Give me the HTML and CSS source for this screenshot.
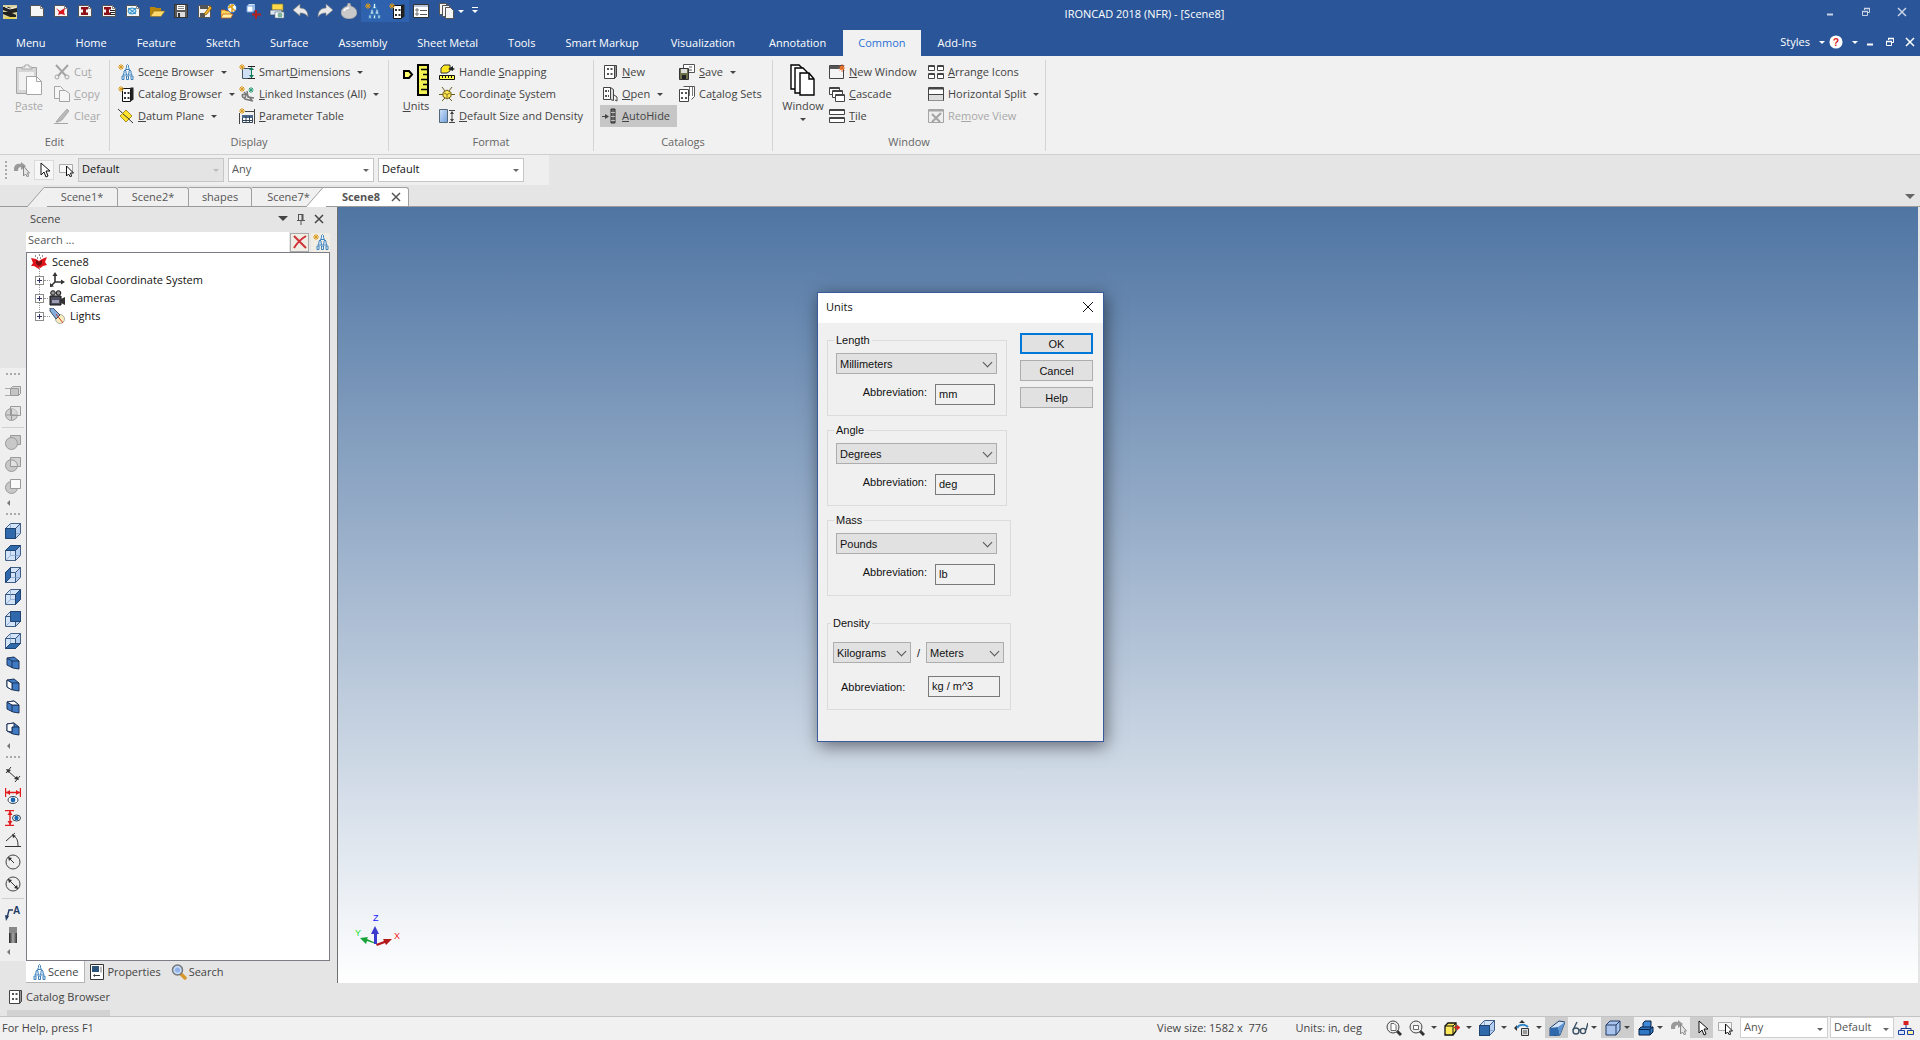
FILE: index.html
```html
<!DOCTYPE html>
<html lang="en">
  <head>
    <meta charset="UTF-8" />
    <meta name="viewport" content="width=device-width, initial-scale=1.0" />
    <title>IRONCAD 2018 (NFR) - [Scene8]</title>
    <link rel="stylesheet" href="styles.css">
  </head>
  <body>
    <!-- icon sprite -->
    <svg class="sprite" aria-hidden="true">
      <defs>
        <linearGradient id="g-blue" x1="0" y1="0" x2="1" y2="1">
          <stop offset="0" stop-color="#cfe2fa" /><stop offset="1" stop-color="#6f9fdc" />
        </linearGradient>
        <linearGradient id="g-metal" x1="0" y1="0" x2="1" y2="0">
          <stop offset="0" stop-color="#222" /><stop offset=".5" stop-color="#aaa" /><stop offset="1" stop-color="#333" />
        </linearGradient>
      </defs>
      <symbol id="i-app" viewBox="0 0 16 16">
        <path d="M1 1h14v14H1z" fill="#d9d09a" /><path d="M1 3h6l3 2 5-1v4l-5 1 4 2v2H8L1 10V8l5 0-5-2z" fill="#222" /><path d="M3 3l5 2 6-2" stroke="#eee" fill="none" /><path d="M3 13h10v2H3z" fill="#e8d34c" />
      </symbol>
      <symbol id="i-page" viewBox="0 0 16 16">
        <path d="M1.500 2.500h10l3 3v8h-13z" fill="#f6f6f6" stroke="#555" /><path d="M11.500 2.500v3h3" fill="none" stroke="#888" />
      </symbol>
      <symbol id="i-page-red" viewBox="0 0 16 16">
        <use href="#i-page" /><path d="M3 5l4 3 5-3-1 4 1 3-4-1-3 1 1-3z" fill="#d8181c" />
      </symbol>
      <symbol id="i-page-beam" viewBox="0 0 16 16">
        <use href="#i-page" /><path d="M4 4h7v2.500H9v3h2V12H4V9.500h2v-3H4z" fill="#8f1118" />
      </symbol>
      <symbol id="i-page-beam2" viewBox="0 0 16 16">
        <use href="#i-page" /><path d="M3 4h7v2.500H8v3h2V12H3V9.500h2v-3H3z" fill="#8f1118" /><path d="M9 7.500h5M9 9.500h5M9 11.500h5" stroke="#222" />
      </symbol>
      <symbol id="i-page-blue" viewBox="0 0 16 16">
        <use href="#i-page" /><ellipse cx="7" cy="8" rx="4" ry="3" fill="#bfe2f5" stroke="#2b8cc9" /><path d="M3 5l8 6M4 11l7-6" stroke="#2b8cc9" />
      </symbol>
      <symbol id="i-folder" viewBox="0 0 16 16">
        <path d="M1 4h5l1 1h5v3H5l-3 5H1z" fill="#b8860b" /><path d="M5 8h11l-4 5.500H1.500z" fill="#ffd96b" stroke="#8a6a14" stroke-width=".6" />
      </symbol>
      <symbol id="i-save" viewBox="0 0 16 16">
        <path d="M1.500 1.500h13v13h-13z" fill="#5a5a5a" stroke="#333" /><path d="M4 2h8v5H4z" fill="#fff" /><path d="M4 9h8v5H4z" fill="#ddd" /><path d="M5 10h2v4H5z" fill="#333" /><path d="M5 3.500h6M5 5.500h6" stroke="#888" />
      </symbol>
      <symbol id="i-save-as" viewBox="0 0 16 16">
        <path d="M1.500 2.500h12v12h-12z" fill="#f1f1f1" stroke="#555" /><path d="M3 3h8v3H3zM3 10h5v4H3z" fill="#555" /><path d="M7 11l6-8 2 2-6 7z" fill="#f0b429" stroke="#7a4b00" stroke-width=".7" />
      </symbol>
      <symbol id="i-open-lib" viewBox="0 0 16 16">
        <path d="M0 7h4l1 1h5v6H0z" fill="#ffd75e" stroke="#c55a11" stroke-width=".8" /><circle cx="11" cy="5" r="4.500" fill="#fff" stroke="#2f6fc4" /><path d="M8 2l6 6M11 1v8M7 5l6-3" stroke="#e0a11b" stroke-width="1.500" /><path d="M2 11h10l-2 4H0z" fill="#fff0a8" stroke="#c55a11" stroke-width=".8" />
      </symbol>
      <symbol id="i-cube-plus" viewBox="0 0 16 16">
        <path d="M2 3l2-2h6l-2 2z" fill="#cfe2fa" /><path d="M2 3h6v6H2z" fill="#fff" stroke="#6f9fdc" /><path d="M8 3l2-2v6L8 9z" fill="#9bbbe6" /><path d="M11 7v9M7 11.500h9" stroke="#b22020" stroke-width="2" />
      </symbol>
      <symbol id="i-print" viewBox="0 0 16 16">
        <path d="M3 1h11v7H3z" fill="#ffd84a" stroke="#7a7a33" stroke-width=".7" /><path d="M1 7h12v5H1z" fill="#d9e6f2" stroke="#345" stroke-width=".7" /><path d="M6 9h9v6H6z" fill="#fff" stroke="#678" stroke-width=".7" /><circle cx="11" cy="12" r="2.500" fill="#7fb3a0" />
      </symbol>
      <symbol id="i-undo" viewBox="0 0 16 16">
        <path d="M0 7l7-6v4c5 0 8 3 8 9-2-3-4-4-8-4v3z" fill="#e8e8e8" stroke="#777" stroke-width=".6" />
      </symbol>
      <symbol id="i-redo" viewBox="0 0 16 16">
        <path d="M16 7L9 1v4c-5 0-8 3-8 9 2-3 4-4 8-4v3z" fill="#e8e8e8" stroke="#777" stroke-width=".6" />
      </symbol>
      <symbol id="i-ball" viewBox="0 0 16 16">
        <path d="M7 0h2l1 3c3 1 6 3 6 7 0 3-4 6-8 6s-8-3-8-6c0-4 3-6 6-7z" fill="#c9c9c9" stroke="#8a8a8a" stroke-width=".6" /><path d="M3 8c1-3 4-3 5-3" stroke="#fff" fill="none" stroke-width="1.500" />
      </symbol>
      <symbol id="i-star" viewBox="0 0 16 16">
        <path d="M3 0v6M0 3h6M1 1l4 4M5 1L1 5" stroke="#d99a1c" stroke-width="1" />
      </symbol>
      <symbol id="i-tree" viewBox="0 0 16 16">
        <g fill="#e6f3fb" stroke="#3d80bb" stroke-width="1" stroke-linejoin="round"><path d="M9.500.5l1 1v2l1 2h-4l1-2v-2z" /><path d="M7 6l1 1v2l1 2H5l1-2V7zM12 6l1 1v2l1 2h-4l1-2V7z" /><path d="M4 12h2v3.500H4zM8.500 12h2v3.500h-2zM13 12h2v3.500h-2z" /></g>
      </symbol>
      <symbol id="i-tree-new" viewBox="0 0 16 16"><use href="#i-tree" /><use href="#i-star" /></symbol>
      <symbol id="i-catalog" viewBox="0 0 16 16">
        <path d="M2.500 1.500h10v13h-10z" fill="#fff" stroke="#444" /><path d="M12.500 1.500h2v11l-2 2z" fill="#999" stroke="#444" /><path d="M5 4h2v2H5zM8.500 4h2v2h-2zM5 9h2v2H5zM8.500 9h2v2h-2z" fill="#555" />
      </symbol>
      <symbol id="i-catalog-new" viewBox="0 0 16 16">
        <path d="M4.500 2.500h8v13h-8z" fill="#fff" stroke="#111" /><path d="M12.500 1.500h3v12l-3 2z" fill="#222" /><path d="M6 6h2v2H6zM9.500 6h2v2h-2zM6 11h2v2H6zM9.500 11h2v2h-2z" fill="#333" /><use href="#i-star" />
      </symbol>
      <symbol id="i-list" viewBox="0 0 16 16">
        <path d="M.5 1.500h15v13H.5z" fill="#fff" stroke="#333" /><path d="M1 2h14v2H1z" fill="#b9c4d8" /><path d="M3 6h2v2H3zM3 10h2v2H3z" fill="#fff" stroke="#555" stroke-width=".8" /><path d="M7 7.500h7M7 11.500h7" stroke="#555" />
      </symbol>
      <symbol id="i-pages" viewBox="0 0 16 16">
        <g fill="#f4f4f4" stroke="#555"><path d="M.5.5h7v11h-7z" /><path d="M3.500 2.500h7v11h-7z" /><path d="M6.500 4.500h5l3 3v8h-8z" /></g>
      </symbol>
      <symbol id="i-paste" viewBox="0 0 28 32">
        <path d="M1.500 3.500h20v26h-20z" fill="#d6d6d6" stroke="#a5a5a5" /><path d="M7 5V3h3V1h4v2h3v2z" fill="#f4f4f4" stroke="#a5a5a5" /><path d="M4 8h15v18H4z" fill="#f1f1f1" /><path d="M11.500 12.500h10l5 5v13h-15z" fill="#fff" stroke="#a5a5a5" /><path d="M21.500 12.500v5h5" fill="none" stroke="#a5a5a5" />
      </symbol>
      <symbol id="i-cut" viewBox="0 0 16 16">
        <path d="M2 1l10 11M14 1L4 12" stroke="#a5a5a5" stroke-width="2" /><circle cx="3" cy="13" r="2" fill="none" stroke="#a5a5a5" /><circle cx="13" cy="13" r="2" fill="none" stroke="#a5a5a5" />
      </symbol>
      <symbol id="i-copy" viewBox="0 0 16 16">
        <g fill="#f6f6f6" stroke="#a5a5a5"><path d="M.5.5h6l3 3v9h-9z" /><path d="M5.500 4.500h6l4 3v8h-10z" /></g>
      </symbol>
      <symbol id="i-clear" viewBox="0 0 16 16">
        <path d="M2 14l3-4L13 1l2 2-7 9-4 2z" fill="#b9b9b9" stroke="#9a9a9a" stroke-width=".7" /><path d="M0 15.500h14" stroke="#a5a5a5" />
      </symbol>
      <symbol id="i-datum" viewBox="0 0 16 16">
        <path d="M0 1l15 14" stroke="#333" /><path d="M8 2l6 6-6 6-6-6z" fill="#ffe32e" stroke="#8c7a12" stroke-width=".8" /><path d="M5 6l6 5" stroke="#333" />
      </symbol>
      <symbol id="i-dimension" viewBox="0 0 16 16">
        <path d="M3.500 4.500h9v10h-9z" fill="#cfe0f5" stroke="#456" /><path d="M9 2.500h7M9 14.500h7" stroke="#222" /><path d="M12.500 4v9" stroke="#0c7a55" /><path d="M10 6l2.500-3L15 6zM10 11l2.500 3L15 11z" fill="#0c7a55" /><use href="#i-star" />
      </symbol>
      <symbol id="i-linked" viewBox="0 0 16 16">
        <path d="M5 6l8 8M3 8l3 5 8 2M8 5l1 6 6 1" stroke="#777" stroke-width="1.500" fill="none" /><circle cx="5" cy="10" r="2" fill="#bbb" stroke="#666" /><path d="M12 1v6M9.500 4h5M10 2l4 4M14 2l-4 4" stroke="#2a9c74" /><use href="#i-star" />
      </symbol>
      <symbol id="i-param" viewBox="0 0 16 16">
        <path d="M.5 5v11M15.500 1v15M6 3.500h9" stroke="#444" /><path d="M3.500 7.500h10v7h-10z" fill="#fff" stroke="#345" /><path d="M3 7h11v3H3z" fill="#4a688f" /><path d="M3 12.500h11M7 8v7M10.500 8v7" stroke="#345" /><use href="#i-star" />
      </symbol>
      <symbol id="i-units" viewBox="0 0 28 32">
        <path d="M2 7h5l3 3.500L7 14H2z" fill="#ffff6b" stroke="#000" stroke-width="2" /><path d="M16 1h10v30H16z" fill="#f2f255" stroke="#000" stroke-width="2" /><path d="M19 5.500h6M21 10.500h4M19 15.500h6M21 20.500h4M19 25.500h6" stroke="#000" stroke-width="1.600" />
      </symbol>
      <symbol id="i-snap" viewBox="0 0 16 16">
        <path d="M2 4l3-3h6v6L8 9H2z" fill="#ffe81f" stroke="#333" /><path d="M9 5l5-3v2l2 1-2 1v1z" fill="#222" /><path d="M.5 11.500h15v4H.5z" fill="#ffff4b" stroke="#111" /><path d="M3.500 12v2M6.500 12v2M9.500 12v2M12.500 12v2" stroke="#111" />
      </symbol>
      <symbol id="i-coord" viewBox="0 0 16 16">
        <path d="M8 4l4 2.500v4L8 13l-4-2.500v-4z" fill="#ffe94e" stroke="#6b5b1e" /><path d="M3 1l3 4M13 1l-3 4M0 8.500h4M12 8.500h4M3 15l3-3M13 15l-3-3" stroke="#6b5b1e" /><path d="M8 8.500L5 7M8 8.500L11 7M8 8.500V12" stroke="#6b5b1e" stroke-width=".8" />
      </symbol>
      <symbol id="i-size" viewBox="0 0 16 16">
        <path d="M.5 1.500h8v13h-8z" fill="url(#g-blue)" stroke="#567" /><path d="M10 2.500h6M10 14.500h6M13 4v9" stroke="#444" /><path d="M11 6l2-3 2 3zM11 11l2 3 2-3z" fill="#444" />
      </symbol>
      <symbol id="i-cat-open" viewBox="0 0 16 16">
        <path d="M1.500 1.500h7v12h-7z" fill="#fff" stroke="#444" /><path d="M8.500 1.500l3 2v11l-3-1z" fill="#ddd" stroke="#444" /><path d="M3 4h2v2H3zM3 9h2v2H3zM6 4h1v2H6zM6 9h1v2H6z" fill="#555" /><path d="M12 9l3 2v4l-2-1" stroke="#444" fill="none" />
      </symbol>
      <symbol id="i-autohide" viewBox="0 0 16 16">
        <path d="M0 8.500h6" stroke="#444" /><path d="M3 6l4 2.500L3 11z" fill="#444" /><path d="M9 1h4v14H9z" fill="#666" stroke="#333" /><path d="M9 4.500h4M9 8.500h4M9 12.500h4" stroke="#bbb" />
      </symbol>
      <symbol id="i-cat-save" viewBox="0 0 16 16">
        <path d="M4.500.5h11v8h-11z" fill="#fff" stroke="#555" /><path d="M10 3h3M10 6h3" stroke="#555" /><path d="M.5 4.500h9v11h-9z" fill="#6d7048" stroke="#333" /><path d="M2 5h6v4H2z" fill="#ddd" /><path d="M3 11h4v4H3z" fill="#222" />
      </symbol>
      <symbol id="i-cat-sets" viewBox="0 0 16 16">
        <path d="M4.500.5h11v10l-3 3" fill="#fff" stroke="#555" /><path d="M10.500 1v9M13.500 1v9" stroke="#777" /><path d="M.5 3.500h9v12h-9z" fill="#fff" stroke="#444" /><path d="M2 6h2v2H2zM6 6h2v2H6zM2 11h2v2H2zM6 11h2v2H6z" fill="#555" />
      </symbol>
      <symbol id="i-window" viewBox="0 0 28 32">
        <g fill="#fff" stroke="#000" stroke-width="1.400"><path d="M2 1h8l4 4v20H2z" /><path d="M6 4h8l4 4v21H6z" /><path d="M11 9h9l5 6v16H11z" /><path d="M20 9v6h5" fill="none" /></g>
      </symbol>
      <symbol id="i-new-window" viewBox="0 0 16 16">
        <path d="M.5 1.500h14v13H.5z" fill="#f4f4f4" stroke="#444" /><path d="M1 2h13v3H1z" fill="#555" /><circle cx="13" cy="4" r="2" fill="#ffb52e" /><path d="M13 0v8M9.500 4h6.500M10.500 1.500l5 5M15.500 1.500l-5 5" stroke="#e2572b" stroke-width=".8" />
      </symbol>
      <symbol id="i-cascade" viewBox="0 0 16 16">
        <g fill="#fff" stroke="#444"><path d="M.5 1.500h10v7H.5z" /><path d="M3.500 4.500h10v7h-10z" /><path d="M6.500 8.500h9v7h-9z" /></g><path d="M1 2.500h9M4 5.500h9M7 9.500h8" stroke="#444" />
      </symbol>
      <symbol id="i-tile" viewBox="0 0 16 16">
        <g fill="#fff" stroke="#444"><path d="M.5 1.500h15v5H.5zM.5 9.500h15v5H.5z" /></g><path d="M1 2.500h14M1 10.500h14" stroke="#444" />
      </symbol>
      <symbol id="i-arrange" viewBox="0 0 16 16">
        <g fill="#fff" stroke="#444"><path d="M.5 1.500h6v5h-6zM9.500 1.500h6v5h-6zM.5 9.500h6v5h-6zM9.500 9.500h6v5h-6z" /></g><path d="M1 2.500h5M10 2.500h5M1 10.500h5M10 10.500h5" stroke="#444" />
      </symbol>
      <symbol id="i-hsplit" viewBox="0 0 16 16">
        <path d="M.5 1.500h15v13H.5z" fill="#fff" stroke="#444" /><path d="M1 2.500h14" stroke="#444" stroke-width="2" /><path d="M1 8.500h14v6H1z" fill="#ddd" /><path d="M1 8.500h14" stroke="#444" />
      </symbol>
      <symbol id="i-remove" viewBox="0 0 16 16">
        <path d="M.5 1.500h15v13H.5z" fill="#eee" stroke="#a5a5a5" /><path d="M1 2.500h14" stroke="#a5a5a5" stroke-width="2" /><path d="M4 6l8 8M13 5l-9 9" stroke="#a5a5a5" stroke-width="2" />
      </symbol>
      <symbol id="i-cursor" viewBox="0 0 16 16">
        <path d="M5 1v12l3-3 2 5 2-1-2-5h4z" fill="#fff" stroke="#111" />
      </symbol>
      <symbol id="i-cursor-arc" viewBox="0 0 16 16">
        <path d="M0 7c0-5 4-6 7-5V0l5 4-5 4V5C5 5 4 6 4 9H0z" fill="#9a9a9a" /><path d="M9.500 4v10l2-2 2 3 1-1-1-3h2z" fill="#e4e4e4" stroke="#888" />
      </symbol>
      <symbol id="i-cursor-box" viewBox="0 0 16 16">
        <path d="M1.500 2.500h13v8h-13z" fill="#f7f7f7" stroke="#aaa" /><path d="M8.500 4v10l2-2 2 3 1-1-1-3h3z" fill="#fff" stroke="#111" />
      </symbol>
      <symbol id="i-pin" viewBox="0 0 16 16">
        <path d="M5.500 3v6M5.500 3.500h4M4 9.500h8M8 10v4" stroke="#555" /><path d="M9.500 3v6" stroke="#555" stroke-width="2" />
      </symbol>
      <symbol id="i-x" viewBox="0 0 16 16">
        <path d="M4 4l8 8M12 4l-8 8" stroke="currentColor" stroke-width="1.500" />
      </symbol>
      <symbol id="i-min" viewBox="0 0 16 16"><path d="M5 10.500h6" stroke="currentColor" stroke-width="2" /></symbol>
      <symbol id="i-restore" viewBox="0 0 16 16">
        <path d="M6.500 6V4.500h5v4H10M4.500 7.500h5v4h-5z" fill="none" stroke="currentColor" /><path d="M6 4.500h6M4 7.500h6" stroke="currentColor" stroke-width="1.600" />
      </symbol>
      <symbol id="i-redx" viewBox="0 0 16 16">
        <path d="M2 2c4 4 7 7 12 12M14 2C9 5 5 9 2 14" stroke="#cf3338" stroke-width="2" fill="none" />
      </symbol>
      <symbol id="i-scene" viewBox="0 0 16 16">
        <path d="M0 4l5 1 3 2 3-2 5-2-2 5 2 3-4 1-4 3-5-3-3 0 2-3z" fill="#e0151b" /><path d="M5 6l3 2 3-2v4l-3 2-3-2z" fill="#7a0d10" /><path d="M4 2h1M8 1h1M11 2h1M6 4h1M9 4h1" stroke="#222" />
      </symbol>
      <symbol id="i-axes" viewBox="0 0 16 16">
        <path d="M6 2v8h8M6 10l-4 4" stroke="#333" stroke-width="1.600" fill="none" /><path d="M3.500 4L6 0l2.500 4zM12 7.500l4 2.500-4 2.500zM1 11l0 4 4-.500z" fill="#333" />
      </symbol>
      <symbol id="i-camera" viewBox="0 0 16 16">
        <circle cx="4" cy="3" r="2.300" fill="#999" stroke="#111" /><circle cx="9.500" cy="3" r="2.300" fill="#999" stroke="#111" /><path d="M1 6h11v9H1z" fill="#4e4e5c" stroke="#111" /><path d="M3 10h7v3H3z" fill="#9d9db8" /><path d="M12 9l4-2v8l-4-2z" fill="#333" />
      </symbol>
      <symbol id="i-light" viewBox="0 0 16 16">
        <circle cx="11" cy="11" r="4.500" fill="#fbeebd" stroke="#999" stroke-width=".8" /><path d="M1 0l3 0 7 7-4 4-6-8z" fill="#87aede" stroke="#234" stroke-width=".8" /><path d="M7 6l7 9" stroke="#d33b2b" />
      </symbol>
      <symbol id="i-props" viewBox="0 0 16 16">
        <path d="M1.500.5h13v15h-13z" fill="#fff" stroke="#333" /><path d="M3 2h7v6H3z" fill="#2c5379" /><path d="M12 2.500v6" stroke="#777" /><path d="M5 11.500h6" stroke="#333" /><path d="M4 11.500l2-1.500v3z" fill="#333" />
      </symbol>
      <symbol id="i-search" viewBox="0 0 16 16">
        <path d="M10 10l4 4" stroke="#d8992a" stroke-width="3.500" stroke-linecap="round" /><circle cx="6.500" cy="6" r="5" fill="#c5daf8" stroke="#777" stroke-width="1.500" /><circle cx="6.500" cy="6" r="2.500" fill="#8fb3e8" />
      </symbol>
      <symbol id="i-shape-a" viewBox="0 0 16 16">
        <path d="M0 5.500h5M0 12.500h5" stroke="#aaa" /><path d="M5.500 5.500l2-2h8v7l-2 2h-8z" fill="#ddd" stroke="#999" /><path d="M5.500 5.500h8v7h-8z" fill="#c4c4c4" stroke="#999" />
      </symbol>
      <symbol id="i-shape-b" viewBox="0 0 16 16">
        <circle cx="6.500" cy="9.500" r="6" fill="#d0d0d0" stroke="#999" /><path d="M5.500 1.500h10v9h-10z" fill="#ddd" fill-opacity=".5" stroke="#999" /><path d="M1 10h11M6.500 4v11" stroke="#999" />
      </symbol>
      <symbol id="i-shape-c" viewBox="0 0 16 16">
        <path d="M5.500 1.500h10v9h-10z" fill="#c8c8c8" stroke="#999" /><circle cx="6.500" cy="9.500" r="6" fill="#c8c8c8" stroke="#999" />
      </symbol>
      <symbol id="i-shape-d" viewBox="0 0 16 16">
        <circle cx="6.500" cy="9.500" r="6" fill="#c8c8c8" stroke="#999" /><path d="M5.500 1.500h10v9h-10z" fill="#d2d2d2" stroke="#999" /><path d="M5.500 4a6 6 0 0 1 7 6.500h-7z" fill="#e2e2e2" stroke="#999" />
      </symbol>
      <symbol id="i-shape-e" viewBox="0 0 16 16">
        <circle cx="6.500" cy="9.500" r="6" fill="#c8c8c8" stroke="#999" /><path d="M5.500 1.500h10v9h-10z" fill="#fafafa" stroke="#999" />
      </symbol>
      <symbol id="i-cube" viewBox="0 0 16 16">
        <g fill="#d3e4f8" stroke="#2f4f78" stroke-width=".9" stroke-linejoin="round"><path d="M.5 5.500h10v10H.5z" /><path d="M.5 5.500l5-5h10l-5 5z" /><path d="M10.500 5.500l5-5v10l-5 5z" fill="#b4cef0" /></g><path d="M5.500.5v10h10M5.500 10.500l-5 5" fill="none" stroke="#7d9cc4" stroke-width=".7" />
      </symbol>
      <symbol id="i-face-front" viewBox="0 0 16 16"><use href="#i-cube" /><path d="M.5 5.500h10v10H.5z" fill="#2f68ab" stroke="#1d3f6b" stroke-width=".9" /></symbol>
      <symbol id="i-face-top" viewBox="0 0 16 16"><use href="#i-cube" /><path d="M.5 5.500l5-5h10l-5 5z" fill="#2f68ab" stroke="#1d3f6b" stroke-width=".9" /></symbol>
      <symbol id="i-face-left" viewBox="0 0 16 16"><use href="#i-cube" /><path d="M.5 5.500l5-5v10l-5 5z" fill="#2f68ab" stroke="#1d3f6b" stroke-width=".9" /></symbol>
      <symbol id="i-face-right" viewBox="0 0 16 16"><use href="#i-cube" /><path d="M10.500 5.500l5-5v10l-5 5z" fill="#2f68ab" stroke="#1d3f6b" stroke-width=".9" /></symbol>
      <symbol id="i-face-back" viewBox="0 0 16 16"><use href="#i-cube" /><path d="M5.500.5h10v10h-10z" fill="#2f68ab" stroke="#1d3f6b" stroke-width=".9" /></symbol>
      <symbol id="i-face-bottom" viewBox="0 0 16 16"><use href="#i-cube" /><path d="M.5 15.500l5-5h10l-5 5z" fill="#2f68ab" stroke="#1d3f6b" stroke-width=".9" /></symbol>
      <symbol id="i-iso" viewBox="0 0 16 16">
        <path d="M2 3l7-1 5 4v8l-6-1-6-3z" fill="#3f7cc4" stroke="#1d3358" /><path d="M2 3l5 3h7M7 6v7" fill="none" stroke="#1d3358" />
      </symbol>
      <symbol id="i-iso-l" viewBox="0 0 16 16"><use href="#i-iso" /><path d="M2 3l5 3v7l-5-3z" fill="#fff" stroke="#1d3358" /></symbol>
      <symbol id="i-iso-t" viewBox="0 0 16 16"><use href="#i-iso" /><path d="M2 3l7-1 5 4H7z" fill="#fff" stroke="#1d3358" /></symbol>
      <symbol id="i-iso-b" viewBox="0 0 16 16"><use href="#i-iso" /><path d="M2 3l7-1v4H7v5l-5-1z" fill="#fff" stroke="#1d3358" /></symbol>
      <symbol id="i-meas" viewBox="0 0 16 16">
        <path d="M3 5l9 8M1 7l5-6M10 16l5-6" stroke="#333" fill="none" /><path d="M1 3l5 1-3 3zM14 14l-5-1 3-3z" fill="#333" />
      </symbol>
      <symbol id="i-meas-h" viewBox="0 0 16 16">
        <path d="M.5 0v9M15.500 0v9M1 4.500h14" stroke="#e21c1c" stroke-width="1.400" /><path d="M1 4.500l4-2.500v5zM15 4.500l-4-2.500v5z" fill="#e21c1c" /><ellipse cx="8" cy="12" rx="5" ry="3.500" fill="#fff" stroke="#345" /><circle cx="8" cy="12" r="2.400" fill="#1767b3" />
      </symbol>
      <symbol id="i-meas-v" viewBox="0 0 16 16">
        <path d="M0 .5h9M0 15.500h9M5 1v14" stroke="#e21c1c" stroke-width="1.400" /><path d="M5 1l2.500 4h-5zM5 15l2.500-4h-5z" fill="#e21c1c" /><ellipse cx="11.500" cy="8" rx="4" ry="3" fill="#fff" stroke="#345" /><circle cx="11.500" cy="8" r="2.200" fill="#1767b3" />
      </symbol>
      <symbol id="i-angle" viewBox="0 0 16 16">
        <path d="M0 14.500h16M1 9l9-8M8 4c4 1 5 5 5 10" stroke="#333" fill="none" /><path d="M7 2l4 2-3 2z" fill="#333" />
      </symbol>
      <symbol id="i-radius" viewBox="0 0 16 16">
        <circle cx="8" cy="8" r="7" fill="#eee" stroke="#444" /><path d="M4 4l5 5" stroke="#333" /><path d="M3 3l4 1-3 3z" fill="#333" />
      </symbol>
      <symbol id="i-diameter" viewBox="0 0 16 16">
        <circle cx="8" cy="8" r="7" fill="#eee" stroke="#444" /><path d="M3 3l10 10" stroke="#333" /><path d="M3 3l4 1-3 3zM13 13l-4-1 3-3z" fill="#333" />
      </symbol>
      <symbol id="i-thread" viewBox="0 0 16 16">
        <path d="M4 6h8v10H4z" fill="url(#g-metal)" /><path d="M4 1h8M4 3h8M4 5h8" stroke="#222" stroke-width="1.200" />
      </symbol>
      <symbol id="i-zoom-page" viewBox="0 0 16 16">
        <path d="M10 10l5 5" stroke="#333" stroke-width="3" /><circle cx="7" cy="7" r="6" fill="#eee" stroke="#444" /><path d="M5 3.500h3l2 2v5H5z" fill="#fff" stroke="#444" stroke-width=".8" />
      </symbol>
      <symbol id="i-zoom-box" viewBox="0 0 16 16">
        <path d="M10 10l5 5" stroke="#333" stroke-width="3" /><circle cx="7" cy="7" r="6" fill="#eee" stroke="#444" /><path d="M4.500 5.500h5v4h-5z" fill="#fff" stroke="#444" stroke-width=".8" />
      </symbol>
      <symbol id="i-box-yellow" viewBox="0 0 16 16">
        <path d="M1 6l3-3h8v8l-3 4H1z" fill="#ffe85a" stroke="#111" stroke-width="1.300" /><path d="M1 6h8v9M9 6l3-3" fill="none" stroke="#111" /><path d="M10 7.500h6" stroke="#d22" stroke-width="1.400" /><path d="M13 4.500l3 3-3 3z" fill="#d22" />
      </symbol>
      <symbol id="i-orbit" viewBox="0 0 16 16">
        <path d="M8 0l3 3H5zM0 8l3-3v6z" fill="#333" /><path d="M3 8c2-4 8-4 11-1" stroke="#2d83c4" stroke-width="2" fill="none" /><path d="M7.500 8.500h7v7h-7z" fill="#ddd" stroke="#333" /><path d="M9 11h4M9 13h4" stroke="#555" />
      </symbol>
      <symbol id="i-persp" viewBox="0 0 16 16">
        <path d="M1 8l9-7 6 1-5 13-10 1z" fill="#d3e4f8" stroke="#1d3f6b" /><path d="M1 8l8-1 2 8-10 1z" fill="#2f68ab" /><path d="M9 7l7-5-5 13z" fill="#5f93d0" />
      </symbol>
      <symbol id="i-glasses" viewBox="0 0 16 16">
        <circle cx="4" cy="11" r="3" fill="#eee" stroke="#3d5266" stroke-width="1.400" /><circle cx="11" cy="11" r="2.600" fill="#eee" stroke="#3d5266" stroke-width="1.400" /><path d="M1 10l4-8M14 10l2-7M7 10h1.500" stroke="#3d5266" stroke-width="1.400" />
      </symbol>
      <symbol id="i-box-blue" viewBox="0 0 16 16">
        <path d="M1 5l4-4h10v9l-4 5H1z" fill="#a9c4ec" stroke="#223a66" /><path d="M1 5h10v10M11 5l4-4" fill="none" stroke="#223a66" />
      </symbol>
      <symbol id="i-boxes" viewBox="0 0 16 16">
        <path d="M5 3l2-2h6v5l-2 2H5z" fill="#3f8ad8" stroke="#091f44" /><path d="M1 9l2-2h12v5l-3 3H1z" fill="#2f78c4" stroke="#091f44" /><path d="M1 9.500h11v5M12 9l3-2" fill="none" stroke="#091f44" />
      </symbol>
      <symbol id="i-network" viewBox="0 0 16 16">
        <path d="M8 5v4M3 11V8.500h10V11" stroke="#1a2f8c" fill="none" /><path d="M5.500 1h5v4h-5z" fill="#d81e1e" /><path d="M.5 10.500h6v4h-6z" fill="#dbe6ff" stroke="#1a3fa8" /><path d="M9.500 10.500h6v4h-6z" fill="#fff29a" stroke="#1a3fa8" />
      </symbol>
    </svg>

    <header class="titlebar">
      <div class="quick">
        <svg class="icon app"><use href="#i-app" /></svg>
        <button aria-label="New"><svg class="icon"><use href="#i-page" /></svg></button>
        <button aria-label="New scene"><svg class="icon"><use href="#i-page-red" /></svg></button>
        <button aria-label="New drawing"><svg class="icon"><use href="#i-page-beam" /></svg></button>
        <button aria-label="New structural drawing"><svg class="icon"><use href="#i-page-beam2" /></svg></button>
        <button aria-label="New part"><svg class="icon"><use href="#i-page-blue" /></svg></button>
        <button aria-label="Open"><svg class="icon"><use href="#i-folder" /></svg></button>
        <button aria-label="Save"><svg class="icon"><use href="#i-save" /></svg></button>
        <button aria-label="Save as"><svg class="icon"><use href="#i-save-as" /></svg></button>
        <button aria-label="Open library"><svg class="icon"><use href="#i-open-lib" /></svg></button>
        <button aria-label="Insert part"><svg class="icon"><use href="#i-cube-plus" /></svg></button>
        <button aria-label="Print"><svg class="icon"><use href="#i-print" /></svg></button>
        <button aria-label="Undo"><svg class="icon"><use href="#i-undo" /></svg></button>
        <button aria-label="Redo"><svg class="icon"><use href="#i-redo" /></svg></button>
        <button aria-label="TriBall"><svg class="icon"><use href="#i-ball" /></svg></button>
        <button class="on" aria-label="Scene browser"><svg class="icon"><use href="#i-tree-new" /></svg></button>
        <button class="on" aria-label="Catalog browser"><svg class="icon"><use href="#i-catalog-new" /></svg></button>
        <button aria-label="Properties"><svg class="icon"><use href="#i-list" /></svg></button>
        <button class="wide" aria-label="Windows"><svg class="icon"><use href="#i-pages" /></svg><i class="caret"></i></button>
        <button class="last" aria-label="Customize"><i class="caret line"></i></button>
      </div>
      <h1>IRONCAD 2018 (NFR) - [Scene8]</h1>
      <div class="win-buttons">
        <button aria-label="Minimize"><svg class="icon"><use href="#i-min" /></svg></button>
        <button aria-label="Restore"><svg class="icon"><use href="#i-restore" /></svg></button>
        <button aria-label="Close"><svg class="icon"><use href="#i-x" /></svg></button>
      </div>
    </header>

    <nav class="tabs">
      <a href="#">Menu</a>
      <a href="#">Home</a>
      <a href="#">Feature</a>
      <a href="#">Sketch</a>
      <a href="#">Surface</a>
      <a href="#">Assembly</a>
      <a href="#">Sheet Metal</a>
      <a href="#">Tools</a>
      <a href="#">Smart Markup</a>
      <a href="#" class="roomy">Visualization</a>
      <a href="#" class="roomy">Annotation</a>
      <a href="#" class="active">Common</a>
      <a href="#" class="roomy">Add-Ins</a>
      <div class="tabs-right">
        <button>Styles <i class="caret"></i></button>
        <button aria-label="Help"><svg class="help" viewBox="0 0 16 16"><circle cx="8" cy="8" r="7.500" fill="#fff" /><text x="8" y="12" text-anchor="middle">?</text></svg><i class="caret"></i></button>
        <button aria-label="Minimize document"><svg class="icon"><use href="#i-min" /></svg></button>
        <button aria-label="Restore document"><svg class="icon"><use href="#i-restore" /></svg></button>
        <button aria-label="Close document"><svg class="icon"><use href="#i-x" /></svg></button>
      </div>
    </nav>

    <section class="ribbon">
      <div class="group edit">
        <div class="cols">
          <button class="big" disabled><svg><use href="#i-paste" /></svg><span><u>P</u>aste</span></button>
          <div class="col">
            <button class="cmd" disabled><svg class="icon"><use href="#i-cut" /></svg><span>Cu<u>t</u></span></button>
            <button class="cmd" disabled><svg class="icon"><use href="#i-copy" /></svg><span><u>C</u>opy</span></button>
            <button class="cmd" disabled><svg class="icon"><use href="#i-clear" /></svg><span>Cle<u>a</u>r</span></button>
          </div>
        </div>
        <h2>Edit</h2>
      </div>
      <div class="group display">
        <div class="cols">
          <div class="col">
            <button class="cmd"><svg class="icon"><use href="#i-tree-new" /></svg><span>Sce<u>n</u>e Browser</span><i class="caret"></i></button>
            <button class="cmd"><svg class="icon"><use href="#i-catalog-new" /></svg><span>Catalog <u>B</u>rowser</span><i class="caret"></i></button>
            <button class="cmd"><svg class="icon"><use href="#i-datum" /></svg><span><u>D</u>atum Plane</span><i class="caret"></i></button>
          </div>
          <div class="col">
            <button class="cmd"><svg class="icon"><use href="#i-dimension" /></svg><span>Smart<u>D</u>imensions</span><i class="caret"></i></button>
            <button class="cmd"><svg class="icon"><use href="#i-linked" /></svg><span><u>L</u>inked Instances (All)</span><i class="caret"></i></button>
            <button class="cmd"><svg class="icon"><use href="#i-param" /></svg><span><u>P</u>arameter Table</span></button>
          </div>
        </div>
        <h2>Display</h2>
      </div>
      <div class="group format">
        <div class="cols">
          <button class="big"><svg><use href="#i-units" /></svg><span><u>U</u>nits</span></button>
          <div class="col">
            <button class="cmd"><svg class="icon"><use href="#i-snap" /></svg><span>Handle <u>S</u>napping</span></button>
            <button class="cmd"><svg class="icon"><use href="#i-coord" /></svg><span>Coordina<u>t</u>e System</span></button>
            <button class="cmd"><svg class="icon"><use href="#i-size" /></svg><span><u>D</u>efault Size and Density</span></button>
          </div>
        </div>
        <h2>Format</h2>
      </div>
      <div class="group catalogs">
        <div class="cols">
          <div class="col">
            <button class="cmd"><svg class="icon"><use href="#i-catalog" /></svg><span><u>N</u>ew</span></button>
            <button class="cmd"><svg class="icon"><use href="#i-cat-open" /></svg><span><u>O</u>pen</span><i class="caret"></i></button>
            <button class="cmd pressed"><svg class="icon"><use href="#i-autohide" /></svg><span><u>A</u>utoHide</span></button>
          </div>
          <div class="col">
            <button class="cmd"><svg class="icon"><use href="#i-cat-save" /></svg><span><u>S</u>ave</span><i class="caret"></i></button>
            <button class="cmd"><svg class="icon"><use href="#i-cat-sets" /></svg><span>Ca<u>t</u>alog Sets</span></button>
          </div>
        </div>
        <h2>Catalogs</h2>
      </div>
      <div class="group window">
        <div class="cols">
          <button class="big"><svg><use href="#i-window" /></svg><span>Window</span><i class="caret"></i></button>
          <div class="col">
            <button class="cmd"><svg class="icon"><use href="#i-new-window" /></svg><span><u>N</u>ew Window</span></button>
            <button class="cmd"><svg class="icon"><use href="#i-cascade" /></svg><span><u>C</u>ascade</span></button>
            <button class="cmd"><svg class="icon"><use href="#i-tile" /></svg><span><u>T</u>ile</span></button>
          </div>
          <div class="col">
            <button class="cmd"><svg class="icon"><use href="#i-arrange" /></svg><span><u>A</u>rrange Icons</span></button>
            <button class="cmd"><svg class="icon"><use href="#i-hsplit" /></svg><span>Horizontal Split</span><i class="caret"></i></button>
            <button class="cmd" disabled><svg class="icon"><use href="#i-remove" /></svg><span>Re<u>m</u>ove View</span></button>
          </div>
        </div>
        <h2>Window</h2>
      </div>
    </section>

    <div class="selection-row">
      <div class="selection-bar">
        <i class="grip-v"></i>
        <button aria-label="Selection filter"><svg class="icon"><use href="#i-cursor-arc" /></svg></button>
        <button class="framed" aria-label="Select"><svg class="icon"><use href="#i-cursor" /></svg></button>
        <button aria-label="Box select"><svg class="icon"><use href="#i-cursor-box" /></svg></button>
        <span class="combo off"><select aria-label="Configuration" disabled><option>Default</option></select></span>
        <span class="combo gray"><select aria-label="Selection type"><option>Any</option></select></span>
        <span class="combo"><select aria-label="Style"><option>Default</option></select></span>
      </div>
    </div>

    <div class="doc-tabs">
      <svg class="wedge" viewBox="0 0 20 20"><path d="M0 20L17 .5H20V20z" fill="#f0f0f0" /><path d="M0 20L17 .5H20" fill="none" stroke="#a0a0a0" /></svg>
      <a href="#">Scene1*</a>
      <a href="#">Scene2*</a>
      <a href="#" class="short">shapes</a>
      <a href="#" class="last">Scene7*</a>
      <svg class="wedge over" viewBox="0 0 20 20"><path d="M0 20L17 .5H20V20z" fill="#fff" /><path d="M0 20L17 .5H20" fill="none" stroke="#a0a0a0" /></svg>
      <a href="#" class="active">Scene8 <svg class="icon"><use href="#i-x" /></svg></a>
      <button aria-label="Tab list"><i class="caret large"></i></button>
    </div>

    <main>
      <div class="side-tools">
        <i class="grip"></i>
        <button aria-label="Shape properties"><svg class="icon"><use href="#i-shape-a" /></svg></button>
        <button aria-label="Shape mesh"><svg class="icon"><use href="#i-shape-b" /></svg></button>
        <hr>
        <button aria-label="Union"><svg class="icon"><use href="#i-shape-c" /></svg></button>
        <button aria-label="Intersect"><svg class="icon"><use href="#i-shape-d" /></svg></button>
        <button aria-label="Subtract"><svg class="icon"><use href="#i-shape-e" /></svg></button>
        <i class="more"></i>
        <i class="grip"></i>
        <button aria-label="Front view"><svg class="icon"><use href="#i-face-front" /></svg></button>
        <button aria-label="Top view"><svg class="icon"><use href="#i-face-top" /></svg></button>
        <button aria-label="Left view"><svg class="icon"><use href="#i-face-left" /></svg></button>
        <button aria-label="Right view"><svg class="icon"><use href="#i-face-right" /></svg></button>
        <button aria-label="Back view"><svg class="icon"><use href="#i-face-back" /></svg></button>
        <button aria-label="Bottom view"><svg class="icon"><use href="#i-face-bottom" /></svg></button>
        <button aria-label="Isometric view"><svg class="icon"><use href="#i-iso" /></svg></button>
        <button aria-label="Left isometric view"><svg class="icon"><use href="#i-iso-l" /></svg></button>
        <button aria-label="Top isometric view"><svg class="icon"><use href="#i-iso-t" /></svg></button>
        <button aria-label="Back isometric view"><svg class="icon"><use href="#i-iso-b" /></svg></button>
        <i class="more"></i>
        <i class="grip"></i>
        <button aria-label="Linear dimension"><svg class="icon"><use href="#i-meas" /></svg></button>
        <button aria-label="Horizontal dimension"><svg class="icon"><use href="#i-meas-h" /></svg></button>
        <button aria-label="Vertical dimension"><svg class="icon"><use href="#i-meas-v" /></svg></button>
        <button aria-label="Angle dimension"><svg class="icon"><use href="#i-angle" /></svg></button>
        <button aria-label="Radius dimension"><svg class="icon"><use href="#i-radius" /></svg></button>
        <button aria-label="Diameter dimension"><svg class="icon"><use href="#i-diameter" /></svg></button>
        <hr>
        <button aria-label="Leader text"><svg class="icon leader" viewBox="0 0 16 16"><path d="M2 13l2-8h4" stroke="#1f3b66" fill="none" stroke-width="1.400" /><path d="M0 10l4 1-3 5z" fill="#1f3b66" /><text x="8" y="9">A</text></svg></button>
        <button aria-label="Thread"><svg class="icon"><use href="#i-thread" /></svg></button>
        <i class="more"></i>
      </div>

      <aside class="scene-panel">
        <div class="panel-head">
          <span>Scene</span>
          <button aria-label="Panel menu"><i class="caret large"></i></button>
          <button aria-label="Pin"><svg class="icon"><use href="#i-pin" /></svg></button>
          <button aria-label="Close panel"><svg class="icon"><use href="#i-x" /></svg></button>
        </div>
        <div class="search">
          <input type="text" placeholder="Search ..." aria-label="Search">
          <button class="clear" aria-label="Clear search"><svg class="icon"><use href="#i-redx" /></svg></button>
          <button aria-label="Search options"><svg class="icon"><use href="#i-tree-new" /></svg></button>
        </div>
        <ul class="tree">
          <li class="root"><svg class="icon"><use href="#i-scene" /></svg>Scene8</li>
          <li><b></b><svg class="icon"><use href="#i-axes" /></svg>Global Coordinate System</li>
          <li><b></b><svg class="icon"><use href="#i-camera" /></svg>Cameras</li>
          <li><b></b><svg class="icon"><use href="#i-light" /></svg>Lights</li>
        </ul>
        <div class="panel-tabs">
          <a href="#" class="active"><svg class="icon"><use href="#i-tree" /></svg>Scene</a>
          <a href="#"><svg class="icon"><use href="#i-props" /></svg>Properties</a>
          <a href="#"><svg class="icon"><use href="#i-search" /></svg>Search</a>
        </div>
      </aside>

      <div class="view">
        <svg class="triad" viewBox="0 0 56 40">
          <path d="M26 32l-9-3-1 3-6-6 8-1-1 2 9 4z" fill="#19a23a" />
          <path d="M26 32l8-3-1-2 9 0-6 6-1-2-8 3z" fill="#b51a1a" />
          <path d="M24 32V22h-3l4-8 4 8h-2v10z" fill="#3a3acc" />
          <text x="23" y="9" fill="#1616ff">Z</text>
          <text x="5" y="24" fill="#19e32d">Y</text>
          <text x="44" y="27" fill="#f01818">X</text>
        </svg>

        <form class="dialog">
          <div class="dialog-title">Units
            <button type="button" aria-label="Close"><svg viewBox="0 0 12 12"><path d="M1 1l10 10M11 1L1 11" stroke="#111" fill="none" /></svg></button>
          </div>
          <div class="dialog-body">
            <div class="units">
              <fieldset>
                <legend>Length</legend>
                <span class="drop"><select aria-label="Length unit"><option>Millimeters</option></select></span>
                <div class="abbr"><label for="len">Abbreviation:</label><input id="len" type="text" value="mm" readonly></div>
              </fieldset>
              <fieldset>
                <legend>Angle</legend>
                <span class="drop"><select aria-label="Angle unit"><option>Degrees</option></select></span>
                <div class="abbr"><label for="ang">Abbreviation:</label><input id="ang" type="text" value="deg" readonly></div>
              </fieldset>
              <fieldset class="wide">
                <legend>Mass</legend>
                <span class="drop"><select aria-label="Mass unit"><option>Pounds</option></select></span>
                <div class="abbr"><label for="mass">Abbreviation:</label><input id="mass" type="text" value="lb" readonly></div>
              </fieldset>
              <fieldset class="wide density">
                <legend>Density</legend>
                <div class="pair">
                  <span class="drop"><select aria-label="Density mass unit"><option>Kilograms</option></select></span>
                  <span>/</span>
                  <span class="drop"><select aria-label="Density length unit"><option>Meters</option></select></span>
                </div>
                <div class="abbr"><label for="dens">Abbreviation:</label><input id="dens" type="text" value="kg / m^3" readonly></div>
              </fieldset>
            </div>
            <div class="dialog-buttons">
              <button type="button" class="default">OK</button>
              <button type="button">Cancel</button>
              <button type="button">Help</button>
            </div>
          </div>
        </form>
      </div>
    </main>

    <div class="dock">
      <a href="#"><svg class="icon"><use href="#i-catalog" /></svg>Catalog Browser</a>
    </div>

    <footer class="status">
      <span class="hint">For Help, press F1</span>
      <span class="size">View size: 1582 x&nbsp; 776</span>
      <span class="unit">Units: in, deg</span>
      <button aria-label="Fit scene"><svg class="icon"><use href="#i-zoom-page" /></svg></button>
      <button class="split" aria-label="Zoom window"><svg class="icon"><use href="#i-zoom-box" /></svg><i class="caret"></i></button>
      <button class="split" aria-label="Look at"><svg class="icon"><use href="#i-box-yellow" /></svg><i class="caret"></i></button>
      <button class="split" aria-label="View direction"><svg class="icon"><use href="#i-face-front" /></svg><i class="caret"></i></button>
      <button class="split" aria-label="Orbit"><svg class="icon"><use href="#i-orbit" /></svg><i class="caret"></i></button>
      <button class="on" aria-label="Perspective"><svg class="icon"><use href="#i-persp" /></svg></button>
      <button class="tight" aria-label="Hide and show"><svg class="icon"><use href="#i-glasses" /></svg><i class="caret"></i></button>
      <button class="tight on" aria-label="Render style"><svg class="icon"><use href="#i-box-blue" /></svg><i class="caret"></i></button>
      <button class="tight" aria-label="Configurations"><svg class="icon"><use href="#i-boxes" /></svg><i class="caret"></i></button>
      <button aria-label="Selection filter"><svg class="icon"><use href="#i-cursor-arc" /></svg></button>
      <button class="on" aria-label="Select"><svg class="icon"><use href="#i-cursor" /></svg></button>
      <button aria-label="Box select"><svg class="icon"><use href="#i-cursor-box" /></svg></button>
      <span class="combo gray any"><select aria-label="Selection type"><option>Any</option></select></span>
      <span class="combo gray"><select aria-label="Style"><option>Default</option></select></span>
      <svg class="icon net"><use href="#i-network" /></svg>
    </footer>
  </body>
</html>
```
FILE: styles.css
```css
* {
  box-sizing: border-box;
}
body {
  margin: 0;
  height: 100vh;
  display: flex;
  flex-direction: column;
  overflow: hidden;
  background: #e5e5e5;
  color: #444;
  font: 11px/16px "Open Sans", "Noto Sans", sans-serif;
}
button,
select,
input {
  font: inherit;
  color: inherit;
  border: none;
  background: none;
  padding: 0;
  margin: 0;
}
button {
  display: flex;
  align-items: center;
  justify-content: center;
}
a {
  color: inherit;
  text-decoration: none;
}
h1,
h2 {
  margin: 0;
  font: inherit;
}
svg {
  display: block;
  flex: none;
}
.sprite {
  position: absolute;
  width: 0;
  height: 0;
}
.icon {
  width: 16px;
  height: 16px;
}
.caret {
  flex: none;
  border: 3px solid transparent;
  border-top-color: currentColor;
  border-bottom: none;
}
.caret.large {
  border-width: 5px;
  border-bottom: none;
}
.caret.line {
  position: relative;
}
.caret.line::before {
  content: "";
  position: absolute;
  left: -3px;
  top: -6px;
  width: 6px;
  height: 1px;
  background: #fff;
}

/* title bar */
.titlebar {
  display: flex;
  height: 30px;
  flex: none;
  background: #2a5699;
  color: #fff;
}
.titlebar h1 {
  flex: 1;
  padding-top: 6px;
  text-align: center;
}
.quick {
  display: flex;
  height: 22px;
  padding-left: 2px;
}
.quick .app {
  margin: 4px 7px 0 0;
}
.quick button {
  width: 24px;
}
.quick .wide {
  width: 36px;
  gap: 3px;
}
.quick .last {
  width: 12px;
}
.quick .on {
  background: #2f62ae;
}
.win-buttons {
  display: flex;
  align-items: center;
  height: 24px;
  padding: 0 10px 0 14px;
  gap: 20px;
  color: #c8d3e4;
}

/* ribbon tabs */
.tabs {
  display: flex;
  height: 26px;
  flex: none;
  padding-left: 1px;
  background: #2a5699;
  color: #fff;
}
.tabs > a {
  padding: 5px 15px 0;
}
.tabs > .roomy {
  padding: 5px 17px 0;
}
.tabs .active {
  background: #f1f1f1;
  color: #2a72d4;
}
.tabs-right {
  display: flex;
  align-items: center;
  margin-left: auto;
  padding: 0 2px 2px 0;
  gap: 4px;
}
.tabs-right button {
  gap: 9px;
}
.help {
  width: 14px;
  height: 14px;
  fill: #d22;
  font: bold 12px "Liberation Sans", sans-serif;
}

/* ribbon */
.ribbon {
  display: flex;
  height: 99px;
  flex: none;
  padding: 4px 0 3px;
  background: #f1f1f1;
  border-bottom: 1px solid #cfcfcf;
}
.group {
  padding: 1px 0 0 6px;
  border-right: 1px solid #d4d4d4;
}
.group h2 {
  margin-left: -6px;
  padding-top: 7px;
  text-align: center;
  color: #666;
}
.cols {
  display: grid;
  height: 66px;
}
.edit {
  width: 110px;
}
.edit .cols {
  grid-template-columns: 46px auto;
}
.display {
  width: 279px;
}
.display .cols {
  grid-template-columns: 121px auto;
}
.format {
  width: 205px;
}
.format .cols {
  grid-template-columns: 42px auto;
}
.catalogs {
  width: 179px;
}
.catalogs .cols {
  grid-template-columns: 77px auto;
}
.window {
  width: 273px;
}
.window .cols {
  grid-template-columns: 48px 99px auto;
}
.cmd {
  height: 22px;
  width: 100%;
  justify-content: flex-start;
  gap: 4px;
  padding: 0 2px;
  white-space: nowrap;
}
.cmd .caret {
  margin-left: 3px;
}
.cmd:disabled,
.big:disabled {
  color: #a8a8a8;
}
.pressed {
  background: #c6c6c6;
}
.big {
  flex-direction: column;
  justify-content: flex-start;
  padding-top: 3px;
}
.big svg {
  width: 28px;
  height: 32px;
}
.big span {
  margin-top: 2px;
}
.big .caret {
  margin-top: 4px;
}

/* selection toolbar */
.selection-row {
  height: 32px;
  flex: none;
}
.selection-bar {
  display: flex;
  align-items: center;
  width: 549px;
  height: 30px;
  padding-left: 5px;
  background: #efefef;
}
.selection-bar button {
  width: 20px;
  height: 20px;
  margin-right: 2px;
}
.selection-bar .framed {
  border: 1px solid #dadada;
  background: #f7f7f7;
}
.grip-v {
  width: 2px;
  height: 18px;
  margin-right: 5px;
  background: repeating-linear-gradient(#aaa 0 2px, transparent 2px 4px);
}
.combo {
  position: relative;
  display: block;
  width: 146px;
  height: 24px;
  margin-right: 4px;
  border: 1px solid #c6c6c6;
  background: #fff;
  color: #111;
}
.combo select {
  appearance: none;
  width: 100%;
  height: 100%;
  padding: 0 0 2px 3px;
  opacity: 1;
}
.combo::after {
  content: "";
  position: absolute;
  right: 4px;
  top: 10px;
  border: 3px solid transparent;
  border-top-color: #666;
  border-bottom: none;
}
.combo.gray {
  color: #555;
}
.combo.off {
  background: #e4e4e4;
}
.combo.off::after {
  border-top-color: #bbb;
}

/* document tabs */
.doc-tabs {
  display: flex;
  height: 20px;
  flex: none;
  padding-left: 27px;
  border-bottom: 1px solid #9a9a9a;
}
.doc-tabs a {
  display: flex;
  align-items: center;
  justify-content: center;
  width: 71px;
  height: 19px;
  background: #f0f0f0;
  border: 1px solid #a0a0a0;
  border-width: 1px 1px 0 0;
  border-radius: 0 3px 0 0;
  color: #555;
}
.doc-tabs .short {
  width: 63px;
}
.doc-tabs .last {
  width: 74px;
}
.doc-tabs .active {
  width: 83px;
  gap: 8px;
  padding-left: 12px;
  background: #fff;
  font-weight: bold;
}
.wedge {
  width: 20px;
  height: 20px;
}
.wedge.over {
  position: relative;
  margin-left: -20px;
}
.doc-tabs button {
  margin-left: auto;
  padding-right: 5px;
  color: #666;
}

/* work area */
main {
  display: flex;
  flex: 1;
  min-height: 0;
}
.side-tools {
  display: flex;
  flex-direction: column;
  align-items: center;
  align-self: flex-end;
  width: 26px;
  padding-bottom: 4px;
  margin-bottom: 22px;
  background: #efefef;
}
.side-tools button {
  width: 22px;
  height: 22px;
}
.side-tools hr {
  width: 22px;
  margin: 3px 0;
  border: none;
  border-top: 1px solid #cfcfcf;
}
.leader {
  fill: #1f3b66;
  font: bold 10px "Liberation Sans", sans-serif;
}
.grip {
  width: 14px;
  height: 2px;
  margin: 5px 0;
  background: repeating-linear-gradient(90deg, #aaa 0 2px, transparent 2px 4px);
}
.more {
  margin: 3px 10px 2px 0;
  border: 3px solid transparent;
  border-right-color: #777;
  border-left: none;
}

/* scene panel */
.scene-panel {
  display: flex;
  flex-direction: column;
  width: 304px;
}
.panel-head {
  display: flex;
  align-items: center;
  height: 25px;
  padding: 0 2px 2px 4px;
}
.panel-head span {
  margin-right: auto;
}
.panel-head button {
  width: 18px;
}
.search {
  display: flex;
  align-items: center;
  height: 20px;
}
.search input {
  flex: 1;
  min-width: 0;
  height: 20px;
  padding: 0 0 5px 2px;
  background: #fff;
}
.search input::placeholder {
  color: #555;
}
.search button {
  width: 19px;
  height: 19px;
  background: #f0eee4;
}
.search .clear {
  margin: 0 2px 0 1px;
  border: 1px solid #aaa;
}
.tree {
  flex: 1;
  margin: 0;
  padding: 0 0 0 4px;
  list-style: none;
  background: #fff;
  border: 1px solid #7c7c86;
  color: #111;
}
.tree li {
  display: flex;
  align-items: center;
  height: 18px;
  padding-left: 4px;
  gap: 5px;
}
.tree .root {
  padding-left: 0;
}
.tree b {
  position: relative;
  width: 9px;
  height: 9px;
  border: 1px solid #8c8c8c;
  background:
    linear-gradient(#336, #336) 1px 3px / 5px 1px no-repeat,
    linear-gradient(#336, #336) 3px 1px / 1px 5px no-repeat;
}
.tree b::before {
  content: "";
  position: absolute;
  left: 3px;
  top: -10px;
  height: 9px;
  border-left: 1px dotted #999;
}
.tree b::after {
  content: "";
  position: absolute;
  left: 8px;
  top: 3px;
  width: 6px;
  border-top: 1px dotted #999;
}
.panel-tabs {
  display: flex;
  height: 22px;
}
.panel-tabs a {
  display: flex;
  align-items: center;
  gap: 2px;
  padding: 0 6px 0 4px;
}
.panel-tabs .active {
  background: #fff;
  border: 1px solid #b5b5b5;
  border-width: 0 1px 1px 0;
}

/* 3D view */
.view {
  position: relative;
  flex: 1;
  margin: 0 2px 0 7px;
  border-left: 1px solid #707070;
  background: linear-gradient(#4f75a3, #fff);
}
.triad {
  position: absolute;
  left: 12px;
  bottom: 31px;
  width: 56px;
  height: 40px;
  font: 9px "Liberation Sans", sans-serif;
}

/* units dialog */
.dialog {
  position: absolute;
  left: 479px;
  top: 85px;
  width: 287px;
  height: 450px;
  border: 1px solid #3a5a9c;
  background: #f0f0f0;
  color: #111;
  font: 11px/14px "Liberation Sans", sans-serif;
  box-shadow: 2px 4px 16px rgba(0, 0, 0, 0.5);
}
.dialog-title {
  display: flex;
  align-items: center;
  justify-content: space-between;
  height: 30px;
  padding: 0 9px 2px 8px;
  background: #fff;
  font-family: "Open Sans", "Noto Sans", sans-serif;
}
.dialog-title svg {
  width: 12px;
  height: 12px;
}
.dialog-body {
  display: flex;
  justify-content: space-between;
  padding: 10px 10px 10px 9px;
}
fieldset {
  width: 180px;
  margin: 0 0 7px;
  padding: 6px 0 10px 8px;
  border: 1px solid #dcdcdc;
}
fieldset.wide {
  width: 184px;
}
fieldset.density {
  margin-top: 20px;
  padding: 12px 0 12px 5px;
}
legend {
  padding: 0 2px;
  margin-left: -2px;
}
.drop {
  position: relative;
  display: block;
  width: 161px;
  height: 21px;
  border: 1px solid #adadad;
  background: #e1e1e1;
}
.drop select {
  appearance: none;
  width: 100%;
  height: 100%;
  padding-left: 3px;
}
.drop::after {
  content: "";
  position: absolute;
  right: 5px;
  top: 5px;
  width: 6px;
  height: 6px;
  border: solid #555;
  border-width: 0 1px 1px 0;
  transform: rotate(45deg);
}
.abbr {
  display: flex;
  justify-content: flex-end;
  gap: 8px;
  width: 159px;
  margin-top: 10px;
}
.abbr label {
  padding-top: 1px;
}
.abbr input {
  width: 60px;
  height: 21px;
  padding: 0 0 1px 3px;
  border: 1px solid #7a7a7a;
}
.pair {
  display: flex;
  align-items: center;
  gap: 6px;
}
.pair .drop {
  width: 78px;
}
.density .abbr {
  justify-content: space-between;
  width: 167px;
  margin-top: 13px;
  padding-left: 8px;
}
.density .abbr label {
  padding-top: 4px;
}
.density .abbr input {
  width: 72px;
}
.dialog-buttons {
  display: flex;
  flex-direction: column;
  gap: 6px;
}
.dialog-buttons button {
  width: 73px;
  height: 21px;
  border: 1px solid #adadad;
  background: #e1e1e1;
}
.dialog-buttons .default {
  border: 2px solid #0078d7;
}

/* bottom dock and status bar */
.dock {
  height: 33px;
  flex: none;
  padding-left: 7px;
}
.dock a {
  display: inline-flex;
  gap: 3px;
  height: 33px;
  padding-top: 6px;
  border-bottom: 6px solid #d2d2d2;
}
.status {
  display: flex;
  align-items: center;
  height: 24px;
  flex: none;
  padding: 0 6px 2px 2px;
  background: #f1f1f1;
  border-top: 1px solid #c4c4c4;
}
.status .hint {
  margin-right: auto;
}
.size {
  margin-right: 28px;
}
.unit {
  margin-right: 20px;
}
.status button {
  width: 23px;
  height: 21px;
}
.status .split {
  width: 35px;
  gap: 6px;
}
.status .tight {
  width: 33px;
  gap: 3px;
}
.status .on {
  background: #cdcdcd;
}
.status .combo {
  width: 64px;
  height: 21px;
  margin-right: 2px;
  border-color: #d0d0d0;
}
.status .any {
  width: 88px;
  margin-left: 4px;
}
.net {
  margin-left: 2px;
}
```
